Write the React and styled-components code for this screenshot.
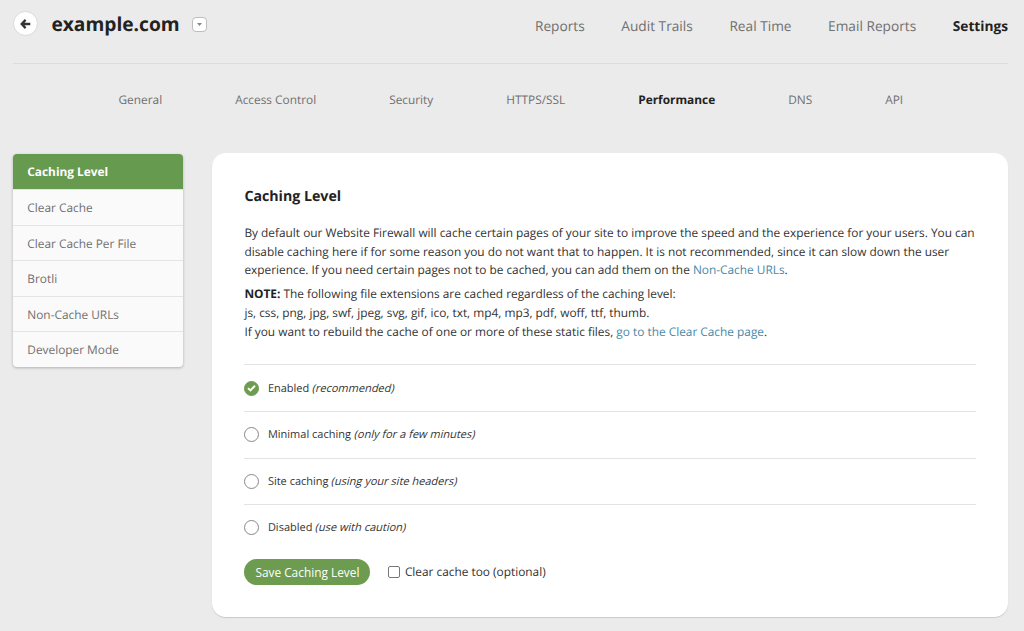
import React, { useState } from "react";
import styled, { createGlobalStyle } from "styled-components";

const GlobalStyle = createGlobalStyle`
  * { box-sizing: border-box; }
  body {
    margin: 0;
    background: #ebebeb;
    color: #333;
    font-family: "Open Sans", "Noto Sans", sans-serif;
    font-size: 11.86px;
    text-rendering: geometricPrecision;
  }
`;

const Page = styled.div`
  height: 631px;
  padding: 0 16px 0 13px;
  overflow: hidden;
`;

const Header = styled.header`
  display: flex;
  align-items: flex-start;
  height: 64px;
  border-bottom: 1px solid #dcdcdc;
`;

const BackButton = styled.button`
  display: flex;
  align-items: center;
  justify-content: center;
  width: 25px;
  height: 25px;
  margin: 11px 0 0 0.4px;
  padding: 0;
  border: 1px solid #dadada;
  border-radius: 50%;
  background: #fff;
`;

const SiteName = styled.h1`
  width: 128px;
  margin: 8px 0 0 13px;
  font-size: 19.2px;
  line-height: 32px;
  font-weight: 700;
  color: #222;
`;

const SiteMenuButton = styled.button`
  display: flex;
  align-items: center;
  justify-content: center;
  width: 15px;
  height: 15px;
  margin: 17px 0 0 12.8px;
  padding: 0;
  border: 1px solid #bdbdbd;
  border-radius: 4px;
  background: #fff;
`;

const MainNav = styled.nav`
  display: flex;
  gap: 36.6px;
  margin: 14px 0 0 auto;
  font-size: 13.7px;
  line-height: 25px;
`;

const NavLink = styled.a`
  color: ${(p) => (p.$active ? "#222" : "#707070")};
  font-weight: ${(p) => (p.$active ? 700 : 400)};
  white-space: nowrap;
`;

const SubNav = styled.nav`
  display: flex;
  gap: 73px;
  height: 89px;
  padding: 26px 0 0 105.5px;
  line-height: 20px;
`;

const Columns = styled.div`
  display: flex;
  align-items: flex-start;
  gap: 29px;
`;

const Sidebar = styled.aside`
  width: 170px;
  margin-top: 1px;
  border-radius: 4px;
  overflow: hidden;
  background: #fafafa;
  box-shadow: 0 1px 3px rgba(0, 0, 0, 0.25);
`;

const SidebarItem = styled.a`
  display: block;
  height: ${(p) => (p.$active ? "35px" : "35.6px")};
  padding-left: 14.3px;
  line-height: ${(p) => (p.$active ? "36px" : "36.4px")};
  border-top: ${(p) => (p.$active ? "0" : "1px solid #e4e4e4")};
  background: ${(p) => (p.$active ? "#669a4e" : "transparent")};
  color: ${(p) => (p.$active ? "#fff" : "#707070")};
  font-weight: ${(p) => (p.$active ? 700 : 400)};
`;

const Card = styled.main`
  width: 796px;
  height: 464px;
  padding: 33.6px 32px 0 32.4px;
  border-radius: 14px;
  background: #fff;
  box-shadow: 0 1px 1px rgba(0, 0, 0, 0.14);
`;

const Title = styled.h2`
  margin: 0 0 17px;
  font-size: 14.2px;
  line-height: 20px;
  font-weight: 700;
  color: #222;
`;

const Paragraph = styled.p`
  margin: 0 0 4.8px;
  line-height: 18.9px;
  white-space: nowrap;
`;

const TextLink = styled.a`
  color: #4689a8;
`;

const Strong = styled.b`
  color: #222;
`;

const Options = styled.div`
  margin-top: 22.6px;
`;

const Option = styled.label`
  display: flex;
  align-items: center;
  gap: 8.5px;
  height: 46.55px;
  border-top: 1px solid #e3e3e3;
  font-size: 11px;
`;

const Hint = styled.em`
  display: inline-block;
  font-style: normal;
  transform: skewX(-14deg);
  transform-origin: 0 68%;
`;

const HiddenRadio = styled.input`
  appearance: none;
  display: none;
`;

const RadioMark = styled.span`
  display: flex;
  align-items: center;
  justify-content: center;
  width: 15px;
  height: 15px;
  border: 1px solid ${(p) => (p.$checked ? "#6d9c50" : "#888")};
  border-radius: 50%;
  background: ${(p) => (p.$checked ? "#6d9c50" : "#fff")};
`;

const Actions = styled.div`
  display: flex;
  align-items: center;
  margin-top: 8px;
`;

const SaveButton = styled.button`
  width: 126px;
  height: 26px;
  padding: 0;
  border: 0;
  border-radius: 13px;
  background: #6d9c50;
  color: #fff;
  font: inherit;
  white-space: nowrap;
`;

const CheckLabel = styled.label`
  display: flex;
  align-items: center;
  gap: 4.5px;
  margin: 1px 0 0 18px;
`;

const Checkbox = styled.input`
  appearance: none;
  width: 12px;
  height: 12px;
  margin: 0;
  border: 1px solid #777;
  border-radius: 2px;
  background: #fff;
`;

const mainLinks = ["Reports", "Audit Trails", "Real Time", "Email Reports", "Settings"];
const subLinks = ["General", "Access Control", "Security", "HTTPS/SSL", "Performance", "DNS", "API"];
const sideLinks = ["Caching Level", "Clear Cache", "Clear Cache Per File", "Brotli", "Non-Cache URLs", "Developer Mode"];
const levels = [
  ["Enabled", "(recommended)"],
  ["Minimal caching", "(only for a few minutes)"],
  ["Site caching", "(using your site headers)"],
  ["Disabled", "(use with caution)"],
];

export default function App() {
  const [level, setLevel] = useState("Enabled");
  return (
    <Page>
      <GlobalStyle />
      <Header>
        <BackButton aria-label="Back">
          <svg width="11" height="10" viewBox="0 0 11 10" fill="none" stroke="#333" strokeWidth="2.3">
            <path d="M5.6 0.9 1.7 5l3.9 4.1M1.9 5H10.3" />
          </svg>
        </BackButton>
        <SiteName>example.com</SiteName>
        <SiteMenuButton aria-label="Choose site">
          <svg width="5" height="3" viewBox="0 0 5 3">
            <path d="M0 0h5L2.5 3z" fill="#888" />
          </svg>
        </SiteMenuButton>
        <MainNav>
          {mainLinks.map((t) => (
            <NavLink key={t} $active={t === "Settings"}>{t}</NavLink>
          ))}
        </MainNav>
      </Header>
      <SubNav>
        {subLinks.map((t) => (
          <NavLink key={t} $active={t === "Performance"}>{t}</NavLink>
        ))}
      </SubNav>
      <Columns>
        <Sidebar>
          {sideLinks.map((t, i) => (
            <SidebarItem key={t} $active={i === 0}>{t}</SidebarItem>
          ))}
        </Sidebar>
        <Card>
          <Title>Caching Level</Title>
          <Paragraph>
            By default our Website Firewall will cache certain pages of your site to improve the speed and the experience for your users. You can<br />
            disable caching here if for some reason you do not want that to happen. It is not recommended, since it can slow down the user<br />
            experience. If you need certain pages not to be cached, you can add them on the <TextLink>Non-Cache URLs</TextLink>.
          </Paragraph>
          <Paragraph>
            <Strong>NOTE:</Strong> The following file extensions are cached regardless of the caching level:<br />
            js, css, png, jpg, swf, jpeg, svg, gif, ico, txt, mp4, mp3, pdf, woff, ttf, thumb.<br />
            If you want to rebuild the cache of one or more of these static files, <TextLink>go to the Clear Cache page</TextLink>.
          </Paragraph>
          <Options>
            {levels.map(([name, hint]) => (
              <Option key={name}>
                <HiddenRadio type="radio" name="level" checked={level === name} onChange={() => setLevel(name)} />
                <RadioMark $checked={level === name}>
                  {level === name && (
                    <svg width="9" height="8" viewBox="0 0 9 8" fill="none" stroke="#fff" strokeWidth="2">
                      <path d="M1 4.1 3.4 6.4 8 1.7" />
                    </svg>
                  )}
                </RadioMark>
                <span>{name} <Hint>{hint}</Hint></span>
              </Option>
            ))}
          </Options>
          <Actions>
            <SaveButton>Save Caching Level</SaveButton>
            <CheckLabel>
              <Checkbox type="checkbox" />
              Clear cache too (optional)
            </CheckLabel>
          </Actions>
        </Card>
      </Columns>
    </Page>
  );
}
